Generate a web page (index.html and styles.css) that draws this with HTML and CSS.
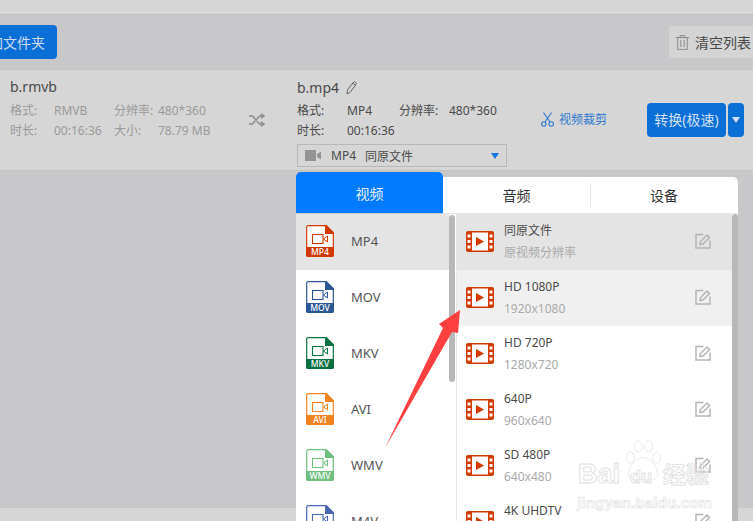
FILE: index.html
```html
<!DOCTYPE html>
<html lang="zh">
<head>
<meta charset="utf-8">
<title>格式转换</title>
<link rel="stylesheet" href="styles.css">
</head>
<body>
<svg class="defs" width="0" height="0" aria-hidden="true">
  <symbol id="file" viewBox="0 0 28 32">
    <path d="M2 .7H20L27.3 8V30a1.3 1.3 0 0 1-1.3 1.3H2A1.3 1.3 0 0 1 .7 30V2A1.3 1.3 0 0 1 2 .7Z" fill="#fff" stroke="currentColor" stroke-width="1.2"/>
    <path d="M19 0H20.5L28 7.500V9H19Z" fill="currentColor"/>
    <path d="M0 22H28V30a2 2 0 0 1-2 2H2a2 2 0 0 1-2-2Z" fill="currentColor"/>
    <rect x="6.500" y="9.500" width="10.500" height="9" fill="none" stroke="currentColor" stroke-width="1.100"/>
    <path d="M17.500 14L21.500 11V17Z" fill="none" stroke="currentColor" stroke-width="1"/>
  </symbol>
  <symbol id="film" viewBox="0 0 28 21">
    <rect width="28" height="21" rx="2" fill="#d03a00"/>
    <rect x="6" y="1.500" width="16" height="18" fill="#fff"/>
    <path d="M1.500 3.500H4.500V6.500H1.500ZM1.500 9H4.500V12H1.500ZM1.500 14.500H4.500V17.500H1.500ZM23.500 3.500H26.500V6.500H23.500ZM23.500 9H26.500V12H23.500ZM23.500 14.500H26.500V17.500H23.500Z" fill="#fff"/>
    <path d="M10 6L18 10.500L10 15Z" fill="#d03a00"/>
  </symbol>
  <symbol id="edit" viewBox="0 0 16 16">
    <path d="M8.500 1.500H1V15H15V7.500" fill="none" stroke="#b5b5b5" stroke-width="1.500"/>
    <path d="M5 11.500L5.500 8.500L12 2L14.500 4.500L8 11Z" fill="none" stroke="#b5b5b5" stroke-width="1.500"/>
  </symbol>
</svg>

<div class="page">
  <div class="topbar"></div>
  <div class="toolbar">
    <div class="add-btn"><span>添加文件夹</span></div>
    <div class="clear-btn">
      <svg class="trash" viewBox="0 0 13 15"><path d="M0 2.500H13M4 2.500V.6H9V2.500M1.700 2.500V14.400H11.300V2.500M4.800 5V12M8.200 5V12" fill="none" stroke="#8c8c8c"/></svg>
      <span>清空列表</span>
    </div>
  </div>

  <div class="item">
    <div class="source">
      <div class="name">b.rmvb</div>
      <div class="meta meta-source">
        <span>格式:</span><span>RMVB</span><span>分辨率:</span><span>480*360</span>
        <span>时长:</span><span>00:16:36</span><span>大小:</span><span>78.79 MB</span>
      </div>
    </div>
    <svg class="shuffle" viewBox="0 0 16 14"><path d="M0 3H3.500L10.500 11H14M0 11H3.500L10.500 3H14M12 .8L15 3L12 5.200M12 8.800L15 11L12 13.200" fill="none" stroke="#8e8e8e" stroke-width="1.500"/></svg>
    <div class="target">
      <div class="name">b.mp4
        <svg class="pencil" viewBox="0 0 12 14"><path d="M2.500 9L8.500 1.200Q9.500 .4 10.600 1.200T11 3.500L5 11.500L2 13Z M7.800 2.200L10.400 4.200" fill="none" stroke="#666" stroke-width="1"/></svg>
      </div>
      <div class="meta meta-target">
        <span>格式:</span><span>MP4</span><span>分辨率:</span><span>480*360</span>
        <span>时长:</span><span>00:16:36</span>
      </div>
      <div class="select">
        <svg class="cam" viewBox="0 0 16 11"><path d="M0 0H11V11H0ZM12 4L16 1.500V9.500L12 7Z" fill="#949494"/></svg>
        <span class="sel-fmt">MP4</span><span>同原文件</span>
        <i class="caret"></i>
      </div>
    </div>
    <div class="cut">
      <svg class="scissors" viewBox="0 0 13 15"><path d="M2.500 .5L9 10M10.500 .5L4 10" fill="none" stroke="#2a78d0" stroke-width="1.100"/><circle cx="2.800" cy="12" r="2.200" fill="none" stroke="#2a78d0" stroke-width="1.100"/><circle cx="10.200" cy="12" r="2.200" fill="none" stroke="#2a78d0" stroke-width="1.100"/></svg>
      <span>视频裁剪</span>
    </div>
    <div class="convert">
      <div class="conv-main">转换(极速)</div>
      <div class="conv-drop"><i></i></div>
    </div>
  </div>
  <div class="spacer"></div>
  <div class="bottombar"></div>
</div>

<div class="popup">
  <div class="tabs">
    <div class="tab active">视频</div>
    <div class="tab">音频</div>
    <div class="tab last">设备</div>
  </div>
  <div class="panel">
    <div class="formats">
      <div class="fmt current"><svg class="file c-mp4"><use href="#file"/><text x="14" y="29.500">MP4</text></svg><span>MP4</span></div>
      <div class="fmt"><svg class="file c-mov"><use href="#file"/><text x="14" y="29.500">MOV</text></svg><span>MOV</span></div>
      <div class="fmt"><svg class="file c-mkv"><use href="#file"/><text x="14" y="29.500">MKV</text></svg><span>MKV</span></div>
      <div class="fmt"><svg class="file c-avi"><use href="#file"/><text x="14" y="29.500">AVI</text></svg><span>AVI</span></div>
      <div class="fmt"><svg class="file c-wmv"><use href="#file"/><text x="14" y="29.500">WMV</text></svg><span>WMV</span></div>
      <div class="fmt"><svg class="file c-m4v"><use href="#file"/><text x="14" y="29.500">M4V</text></svg><span>M4V</span></div>
      <div class="thumb-left"></div>
    </div>
    <div class="presets">
      <div class="preset current"><svg class="film"><use href="#film"/></svg><div class="p-text"><b>同原文件</b><small>原视频分辨率</small></div><svg class="edit"><use href="#edit"/></svg></div>
      <div class="preset hover"><svg class="film"><use href="#film"/></svg><div class="p-text"><b>HD 1080P</b><small>1920x1080</small></div><svg class="edit"><use href="#edit"/></svg></div>
      <div class="preset"><svg class="film"><use href="#film"/></svg><div class="p-text"><b>HD 720P</b><small>1280x720</small></div><svg class="edit"><use href="#edit"/></svg></div>
      <div class="preset"><svg class="film"><use href="#film"/></svg><div class="p-text"><b>640P</b><small>960x640</small></div><svg class="edit"><use href="#edit"/></svg></div>
      <div class="preset"><svg class="film"><use href="#film"/></svg><div class="p-text"><b>SD 480P</b><small>640x480</small></div><svg class="edit"><use href="#edit"/></svg></div>
      <div class="preset"><svg class="film"><use href="#film"/></svg><div class="p-text"><b>4K UHDTV</b><small>3840x2160</small></div><svg class="edit"><use href="#edit"/></svg></div>
    </div>
    <div class="thumb-right"></div>
  </div>
</div>

<svg class="arrow" viewBox="0 0 753 521"><path d="M385 448L443 328L439 324L460 310L458 333L452 332Z" fill="#ff4040"/></svg>

<div class="watermark">
  <svg class="paw" viewBox="0 0 44 60"><g fill="none" stroke="#e2e2e2" stroke-width="1"><ellipse cx="6" cy="22" rx="5" ry="7"/><ellipse cx="16" cy="8" rx="5" ry="7"/><ellipse cx="29" cy="8" rx="5" ry="7"/><ellipse cx="39" cy="22" rx="5" ry="7"/><path d="M22 22C12 22 4 34 4 42C4 52 14 50 22 49C30 50 40 52 40 42C40 34 32 22 22 22Z"/></g></svg>
  <div class="wm-line"><span>Bai</span><span class="wm-du">du</span><span class="wm-cn">经验</span></div>
  <div class="wm-url">jingyan.baidu.com</div>
</div>
</body>
</html>
```
FILE: styles.css
```css
* { box-sizing: border-box; }
html, body { margin: 0; height: 100%; overflow: hidden; }
body {
  font-family: "Noto Sans", "Noto Sans CJK SC", sans-serif;
  font-size: 12px;
  color: #444;
  background: #c8c8ca;
}
.defs { position: absolute; }
.page { height: 521px; display: flex; flex-direction: column; }
.topbar { height: 15px; background: #d6d6d6; border-bottom: 1px solid #c0c0c0; }
.toolbar {
  height: 55px;
  display: flex;
  justify-content: space-between;
  align-items: center;
  border-bottom: 1px solid #c2c2c2;
}
.add-btn {
  width: 57px;
  height: 34px;
  background: #0b6fd8;
  border-radius: 0 4px 4px 0;
  color: #cfdcec;
  font-size: 14px;
  display: flex;
  justify-content: flex-end;
  align-items: center;
  padding-right: 12px;
  overflow: hidden;
  white-space: nowrap;
}
.add-btn span { flex: none; }
.clear-btn {
  width: 84px;
  height: 32px;
  background: #d4d4d4;
  border-radius: 4px 0 0 4px;
  display: flex;
  align-items: center;
  padding-left: 7px;
  gap: 6px;
  font-size: 14px;
  color: #4a4a4a;
  white-space: nowrap;
}
.trash { width: 13px; height: 15px; flex: none; }
.item {
  height: 101px;
  background: #d6d6d6;
  border-bottom: 1px solid #c2c2c2;
  display: flex;
  padding-left: 10px;
}
.source { width: 239px; padding-top: 6px; }
.name { font-size: 14px; line-height: 22px; color: #4a4a4a; display: flex; align-items: center; gap: 6px; }
.meta { display: grid; line-height: 20px; }
.meta-source { grid-template-columns: 44px 60px 44px auto; margin-top: 3px; color: #9a9a9a; }
.shuffle { width: 16px; height: 14px; margin-top: 43px; flex: none; }
.target { width: 210px; margin-left: 32px; padding-top: 7px; }
.pencil { width: 12px; height: 14px; }
.meta-target { grid-template-columns: 50px 52px 50px auto; margin-top: 2px; color: #4a4a4a; }
.select {
  height: 23px;
  margin-top: 3px;
  border: 1px solid #b8b8b8;
  display: flex;
  align-items: center;
  padding-left: 7px;
  color: #4a4a4a;
}
.cam { width: 16px; height: 11px; margin-right: 10px; }
.sel-fmt { margin-right: 9px; }
.caret {
  margin-left: auto;
  margin-right: 7px;
  border-left: 4.500px solid transparent;
  border-right: 4.500px solid transparent;
  border-top: 6px solid #1474e0;
}
.cut {
  display: flex;
  align-items: center;
  gap: 5px;
  margin-left: 34px;
  height: 16px;
  margin-top: 41px;
  color: #2a78d0;
  white-space: nowrap;
}
.scissors { width: 13px; height: 15px; }
.convert { display: flex; gap: 2px; margin-left: 40px; margin-top: 33px; height: 34px; }
.conv-main {
  width: 79px;
  background: #0b6fd8;
  border-radius: 4px;
  color: #d3e0f0;
  font-size: 14px;
  line-height: 34px;
  text-align: center;
  white-space: nowrap;
}
.conv-drop {
  width: 16px;
  background: #0b6fd8;
  border-radius: 4px;
  display: flex;
  align-items: center;
  justify-content: center;
}
.conv-drop i {
  border-left: 4px solid transparent;
  border-right: 4px solid transparent;
  border-top: 6px solid #d3e0f0;
}
.spacer { flex: 1; }
.bottombar { height: 14px; background: #d6d6d6; border-top: 1px solid #c8c8c8; }

.popup {
  position: absolute;
  left: 296px;
  top: 172px;
  width: 442px;
  height: 349px;
  display: flex;
  flex-direction: column;
}
.tabs { height: 42px; display: flex; flex: none; }
.tab {
  width: 147px;
  flex: none;
  margin-top: 5px;
  background: #fff;
  font-size: 14px;
  color: #333;
  line-height: 38px;
  text-align: center;
  position: relative;
  border-bottom: 1px solid #e6e6e6;
}
.tab.last { width: 148px; border-radius: 0 5px 0 0; }
.tab.last::before {
  content: "";
  position: absolute;
  left: 0;
  top: 6px;
  height: 24px;
  border-left: 1px solid #e6e6e6;
}
.tab.active {
  margin-top: 0;
  background: #007aff;
  color: #e6f1ff;
  line-height: 43px;
  border-radius: 5px 5px 0 0;
  border-bottom: 0;
  height: 41px;
}
.panel { flex: 1; display: flex; background: #fff; position: relative; overflow: hidden; }
.formats { width: 161px; flex: none; border-right: 1px solid #e6e6e6; position: relative; }
.fmt {
  height: 56px;
  width: 153px;
  display: flex;
  align-items: center;
  padding: 0 0 2px 10px;
  gap: 17px;
  font-size: 13px;
  color: #555;
}
.fmt.current { background: #e4e4e4; }
.file { width: 28px; height: 32px; flex: none; }
.file text { font-size: 8.500px; fill: #fff; text-anchor: middle; font-weight: 500; }
.c-mp4 { color: #d03a00; }
.c-mov { color: #2b5797; }
.c-mkv { color: #0a7041; }
.c-avi { color: #f58220; }
.c-wmv { color: #6fbf7f; }
.c-m4v { color: #4a66b0; }
.thumb-left {
  position: absolute;
  left: 153px;
  top: 1px;
  width: 6px;
  height: 167px;
  background: #b8b8b8;
  border-radius: 3px;
}
.presets { width: 275px; flex: none; }
.preset { height: 56px; display: flex; align-items: center; padding: 0 21px 2px 9px; }
.preset.current { background: #e4e4e4; }
.preset.hover { background: #f0f0f0; }
.film { width: 28px; height: 21px; flex: none; }
.p-text { margin-left: 10px; display: flex; flex-direction: column; gap: 5px; line-height: 17px; }
.p-text b { font-weight: 400; color: #4a4a4a; }
.p-text small { font-size: 12px; color: #aaa; }
.edit { width: 16px; height: 16px; margin-left: auto; flex: none; }
.thumb-right {
  position: absolute;
  right: 0;
  top: 0;
  bottom: 0;
  width: 6px;
  background: #b8b8b8;
  border-radius: 3px 3px 0 0;
}

.arrow { position: absolute; left: 0; top: 0; width: 753px; height: 521px; pointer-events: none; }
.watermark { position: absolute; left: 578px; top: 440px; width: 140px; color: transparent; }
.paw { position: absolute; left: 44px; top: 0; width: 42px; height: 48px; }
.wm-line {
  display: flex;
  align-items: baseline;
  position: relative;
  font-size: 27px;
  line-height: 32px;
  font-family: "Liberation Sans", sans-serif;
  font-weight: 700;
  -webkit-text-stroke: 1px #e2e2e2;
  margin-top: 17px;
}
.wm-du { font-size: 18px; margin-left: 10px; }
.wm-cn { font-size: 23px; margin-left: 11px; font-family: "Noto Sans CJK SC", sans-serif; }
.wm-url {
  font-family: "Liberation Sans", sans-serif;
  font-size: 15px;
  font-weight: 700;
  letter-spacing: .2px;
  line-height: 18px;
  margin-top: 1px;
  margin-left: -1px;
  white-space: nowrap;
  -webkit-text-stroke: .7px #e2e2e2;
}
```
